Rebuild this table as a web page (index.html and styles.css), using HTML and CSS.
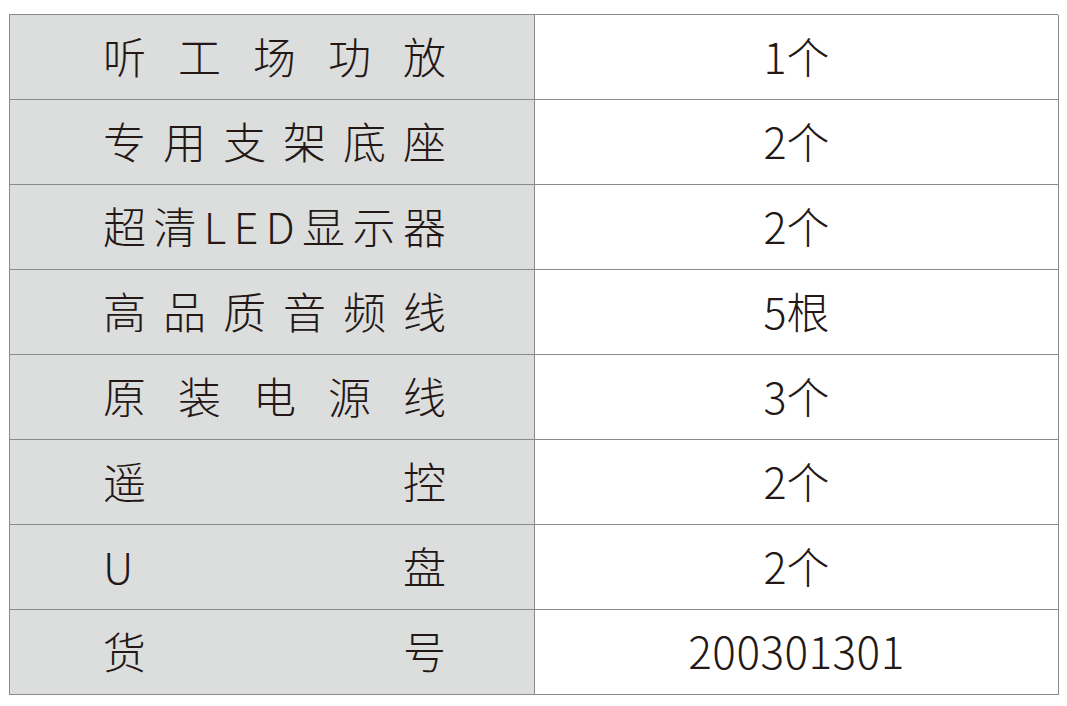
FILE: index.html
```html
<!DOCTYPE html>
<html lang="zh-CN">
<head>
<meta charset="utf-8">
<link rel="stylesheet" href="styles.css">
</head>
<body>
<div class="sheet">
  <div class="label"><span>听</span><span>工</span><span>场</span><span>功</span><span>放</span></div>
  <div class="value">1个</div>
  <div class="label"><span>专</span><span>用</span><span>支</span><span>架</span><span>底</span><span>座</span></div>
  <div class="value">2个</div>
  <div class="label"><span>超</span><span>清</span><span>L</span><span>E</span><span>D</span><span>显</span><span>示</span><span>器</span></div>
  <div class="value">2个</div>
  <div class="label"><span>高</span><span>品</span><span>质</span><span>音</span><span>频</span><span>线</span></div>
  <div class="value">5根</div>
  <div class="label"><span>原</span><span>装</span><span>电</span><span>源</span><span>线</span></div>
  <div class="value">3个</div>
  <div class="label"><span>遥</span><span>控</span></div>
  <div class="value">2个</div>
  <div class="label"><span>U</span><span>盘</span></div>
  <div class="value">2个</div>
  <div class="label"><span>货</span><span>号</span></div>
  <div class="value value-code">200301301</div>
</div>
</body>
</html>
```

FILE: styles.css
```css
html, body {
  margin: 0;
  padding: 0;
  background: #ffffff;
}
body {
  font-family: "Noto Sans CJK SC", "Noto Sans", sans-serif;
  font-weight: 300;
  color: #231815;
}
.sheet {
  margin: 14px 0 0 9px;
  width: 1049px;
  display: grid;
  grid-template-columns: 525px 524px;
  grid-auto-rows: 85px;
  border-top: 1.5px solid #8a8a8a;
  border-left: 1.5px solid #8a8a8a;
  box-sizing: border-box;
}
.label, .value {
  border-right: 1.5px solid #8a8a8a;
  border-bottom: 1.5px solid #8a8a8a;
  font-size: 43px;
  line-height: 1;
  display: flex;
  align-items: center;
  padding-bottom: 4px;
  box-sizing: border-box;
}
.label {
  background: #dcdddd;
  justify-content: space-between;
  padding-left: 93px;
  padding-right: 88px;
}
.value {
  justify-content: center;
  background: #ffffff;
}
.value-code {
  letter-spacing: 0.5px;
  font-size: 44px;
}
```
